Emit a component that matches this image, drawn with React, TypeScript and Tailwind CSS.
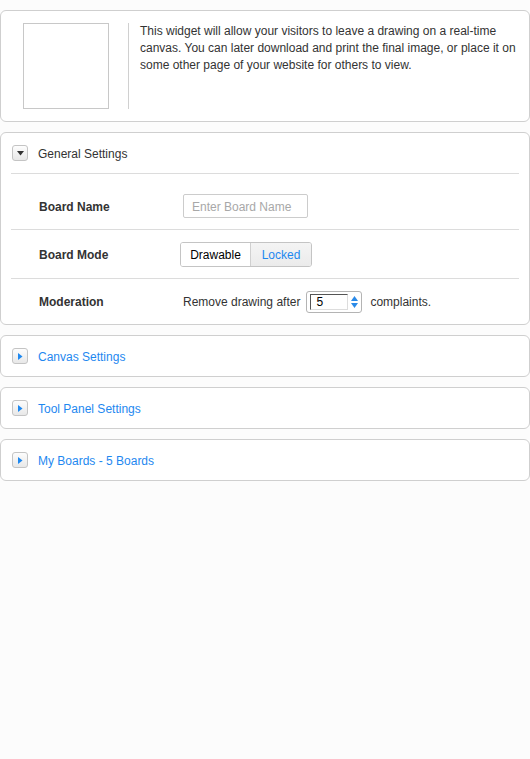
import React from "react";

const font = { fontFamily: '"Liberation Sans", Arial, sans-serif' };

function TriBtn({ open }: { open?: boolean }) {
  return (
    <div className="w-[16px] h-[16px] rounded-[3px] border border-[#c4c4c4] bg-gradient-to-b from-[#fdfdfd] to-[#e8e8e8] flex items-center justify-center shrink-0">
      {open ? (
        <svg width="7" height="5" viewBox="0 0 7 5">
          <path d="M0 0 L7 0 L3.5 4.5 Z" fill="#333" />
        </svg>
      ) : (
        <svg width="5" height="7" viewBox="0 0 5 7">
          <path d="M0 0 L0 7 L4.5 3.5 Z" fill="#1e88f0" />
        </svg>
      )}
    </div>
  );
}

function Collapsed({ title }: { title: string }) {
  return (
    <div className="mt-[10px] h-[42px] w-[530px] rounded-[6px] border border-[#cfcfcf] bg-white flex items-center pl-[11px]">
      <TriBtn />
      <span className="ml-[10px] text-[12px] text-[#1e88f0] pt-[1px]">{title}</span>
    </div>
  );
}

export default function App() {
  return (
    <div className="w-[530px] min-h-[759px] bg-[#fcfcfc] pt-[10px] text-[#333]" style={font}>
      <div className="h-[112px] w-[530px] rounded-[6px] border border-[#cfcfcf] bg-white flex pt-[12px] pl-[22px]">
        <div className="w-[86px] h-[86px] border border-[#c8c8c8] shrink-0" />
        <div className="ml-[19px] w-px h-[86px] bg-[#d0d0d0] shrink-0" />
        <p className="ml-[11px] text-[12px] leading-[17px] text-[#333] w-[382px]">
          This widget will allow your visitors to leave a drawing on a real-time canvas. You can later download and print the final image, or place it on some other page of your website for others to view.
        </p>
      </div>

      <div className="mt-[10px] w-[530px] rounded-[6px] border border-[#cfcfcf] bg-white px-[10px]">
        <div className="h-[40px] flex items-center pl-[1px]">
          <TriBtn open />
          <span className="ml-[10px] text-[12px] text-[#333] pt-[1px]">General Settings</span>
        </div>
        <div className="h-px bg-[#dcdcdc]" />
        <div className="flex items-center pt-[20px] pb-[11px]">
          <div className="w-[172px] pl-[28px] text-[12px] font-bold pt-[2px]">Board Name</div>
          <div className="w-[125px] h-[24px] border border-[#cccccc] rounded-[2px] flex items-center pl-[8px] text-[12px] text-[#a8a8a8] pt-[1px]">
            Enter Board Name
          </div>
        </div>
        <div className="h-px bg-[#dcdcdc]" />
        <div className="flex items-center pt-[12px] pb-[11px]">
          <div className="w-[169px] pl-[28px] text-[12px] font-bold">Board Mode</div>
          <div className="flex h-[25px] rounded-[3px] border border-[#c4c4c4] overflow-hidden text-[12px]">
            <div className="w-[70px] flex items-center justify-center bg-white text-black border-r border-[#d0d0d0]">Drawable</div>
            <div className="w-[60px] flex items-center justify-center bg-gradient-to-b from-[#f4f4f4] to-[#ebebeb] text-[#1e88f0]">Locked</div>
          </div>
        </div>
        <div className="h-px bg-[#dcdcdc]" />
        <div className="flex items-center pt-[12px] pb-[11px] text-[12px]">
          <div className="w-[172px] pl-[28px] font-bold">Moderation</div>
          <span>Remove drawing after</span>
          <div className="ml-[6px] w-[56px] h-[22px] rounded-[3px] border border-[#b4b4b4] bg-white flex items-center px-[3px]">
            <div className="w-[40px] h-[16px] border-t border-l border-[#555] border-r border-b border-r-[#ddd] border-b-[#ddd] flex items-center pl-[5px] text-[12px] text-black">5</div>
            <div className="ml-[3px] flex flex-col items-center gap-[2px]">
              <svg width="7" height="5" viewBox="0 0 7 5"><path d="M0 5 L7 5 L3.5 0 Z" fill="#2a8ae8" /></svg>
              <svg width="7" height="5" viewBox="0 0 7 5"><path d="M0 0 L7 0 L3.5 5 Z" fill="#2a8ae8" /></svg>
            </div>
          </div>
          <span className="ml-[8px]">complaints.</span>
        </div>
      </div>

      <Collapsed title="Canvas Settings" />
      <Collapsed title="Tool Panel Settings" />
      <Collapsed title="My Boards - 5 Boards" />
    </div>
  );
}
